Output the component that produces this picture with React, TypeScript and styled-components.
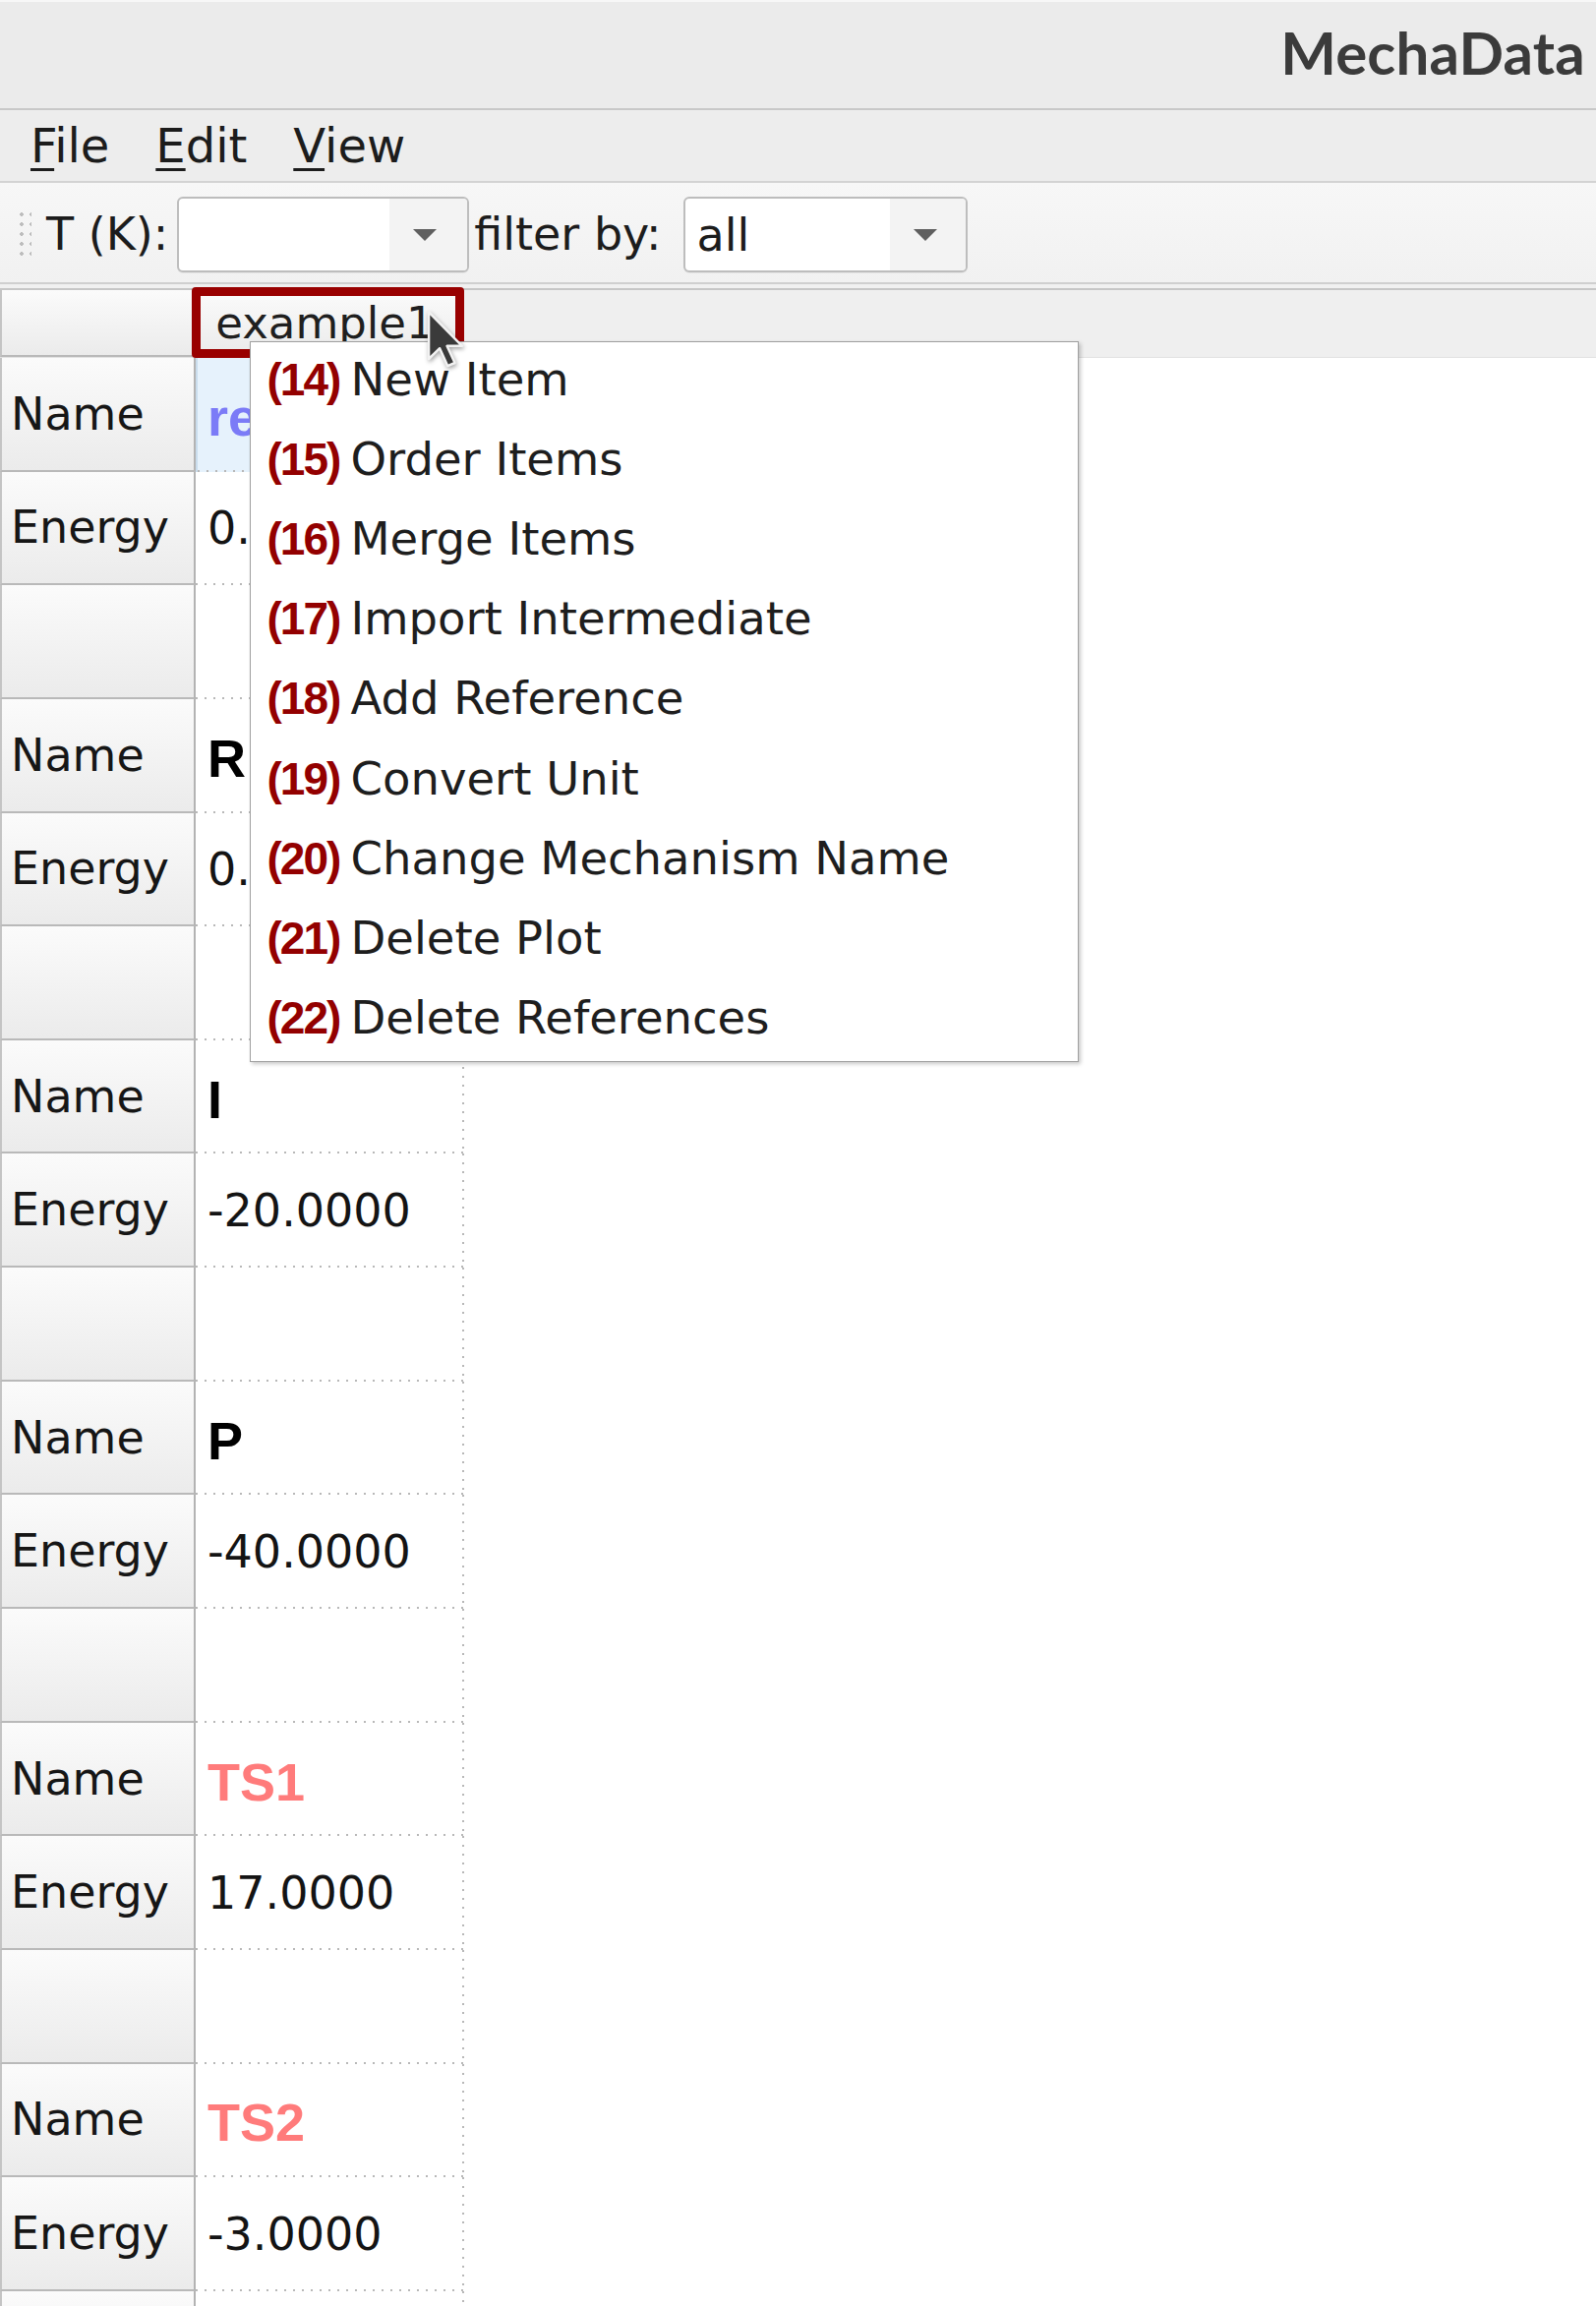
import React from 'react';
import styled, { createGlobalStyle } from 'styled-components';

const Global = createGlobalStyle`
  html, body { margin: 0; padding: 0; background: #ffffff; }
  body {
    width: 1623px;
    height: 2345px;
    overflow: hidden;
    font-family: "DejaVu Sans", "Noto Sans", sans-serif;
  }
`;

const Window = styled.div`
  position: relative;
  width: 1623px;
  height: 2345px;
  overflow: hidden;
  background: #ffffff;
  display: flex;
  flex-direction: column;
`;

const TitleBar = styled.header`
  flex: none;
  height: 112px;
  box-sizing: border-box;
  background: #ebebeb;
  border-top: 2px solid #f7f7f7;
  border-bottom: 2px solid #c8c8c8;
  display: flex;
  justify-content: flex-end;
  align-items: flex-start;
  padding: 15px 11px 0 0;
`;

const Title = styled.h1`
  margin: 0;
  font-family: "Lato", "Open Sans", sans-serif;
  font-weight: 700;
  font-size: 60px;
  line-height: 1.2;
  color: #3b3b3b;
  letter-spacing: 0.2px;
`;

const MenuBar = styled.nav`
  flex: none;
  height: 74px;
  box-sizing: border-box;
  background: #ededed;
  border-bottom: 2px solid #d3d3d3;
  display: flex;
  align-items: center;
  padding-left: 31px;
  gap: 47px;
`;

const MenuItem = styled.span`
  font-size: 48px;
  color: #1c1c1c;
  line-height: 1.15;
  padding-top: 2px;
`;

const Mnemonic = styled.span`
  text-decoration: underline;
  text-decoration-thickness: 3px;
  text-underline-offset: 6px;
`;

const ToolBar = styled.div`
  flex: none;
  height: 103px;
  box-sizing: border-box;
  background: linear-gradient(#f7f7f7, #f1f1f1);
  border-bottom: 2px solid #cfcfcf;
  display: flex;
  align-items: center;
  padding-left: 18px;
  padding-top: 4px;
`;

const Grip = styled.div`
  width: 14px;
  height: 52px;
  margin-right: 15px;
  background-image: radial-gradient(circle, #bdbdbd 1.6px, transparent 2px);
  background-size: 10px 10px;
  background-position: -1px 0;
`;

const ToolLabel = styled.span<{ $after: number }>`
  font-size: 46px;
  color: #1c1c1c;
  line-height: 1.15;
  margin-right: ${p => p.$after}px;
  white-space: pre;
`;

const Combo = styled.div<{ $w: number; $arrow: number }>`
  width: ${p => p.$w}px;
  height: 77px;
  box-sizing: border-box;
  border: 2px solid #bdbdbd;
  border-radius: 6px;
  background: #ffffff;
  display: grid;
  grid-template-columns: 1fr ${p => p.$arrow}px;
  overflow: hidden;
  margin-right: 5px;
  box-shadow: 0 1px 0 rgba(0, 0, 0, 0.05);
`;

const ComboText = styled.span`
  font-size: 46px;
  color: #1c1c1c;
  display: flex;
  align-items: center;
  padding-left: 11px;
`;

const ArrowBox = styled.span<{ $shift: number }>`
  background: #f3f3f3;
  display: flex;
  align-items: center;
  justify-content: center;
  padding-right: ${p => p.$shift}px;
`;

const Triangle = styled.span`
  width: 0;
  height: 0;
  border-left: 12px solid transparent;
  border-right: 12px solid transparent;
  border-top: 12px solid #5f5f5f;
`;

const Divider = styled.div`
  flex: none;
  height: 4px;
  background: #f0f0f0;
  border-bottom: 2px solid #c6c6c6;
`;

const HeaderRow = styled.div`
  flex: none;
  height: 69px;
  box-sizing: border-box;
  display: flex;
  background: #efefef;
  border-bottom: 1px solid #e2e2e2;
`;

const headerFace = `
  background: linear-gradient(#fbfbfb, #ebebeb);
  box-sizing: border-box;
  border-right: 2px solid #b3b3b3;
  border-bottom: 2px solid #b9b9b9;
`;

const CornerCell = styled.div`
  ${headerFace}
  width: 199px;
  border-left: 2px solid #c4c4c4;
`;

const ColumnHeader = styled.div`
  ${headerFace}
  position: relative;
  width: 273px;
  display: flex;
  align-items: center;
  justify-content: center;
  font-size: 45px;
  color: #1f1f1f;
  padding-right: 8px;
`;

const Highlight = styled.span`
  position: absolute;
  left: -4px;
  right: -2px;
  top: -3px;
  bottom: -3px;
  border: 9px solid #990000;
  border-radius: 4px;
  pointer-events: none;
`;

const Body = styled.div`
  flex: none;
  display: grid;
  grid-template-columns: 199px 273px;
  grid-auto-rows: 115.65px;
`;

const RowHeader = styled.div`
  ${headerFace}
  border-left: 2px solid #c4c4c4;
  display: flex;
  align-items: center;
  padding-left: 9px;
  font-size: 46px;
  color: #161616;
`;

const Cell = styled.div<{ $selected?: boolean }>`
  box-sizing: border-box;
  display: flex;
  align-items: center;
  overflow: hidden;
  white-space: nowrap;
  background-color: ${p => (p.$selected ? '#e6f2fc' : '#ffffff')};
  border-left: ${p => (p.$selected ? '2px solid #c9dcec' : '0')};
  padding-left: ${p => (p.$selected ? '10px' : '12px')};
  background-image:
    linear-gradient(to right, #b8b8b8 2px, transparent 2px),
    linear-gradient(to bottom, #b8b8b8 2px, transparent 2px);
  background-size: 9px 2px, 2px 9px;
  background-repeat: repeat-x, repeat-y;
  background-position: left bottom, right top;
`;

const EnergyValue = styled.span`
  font-size: 46px;
  color: #141414;
`;

const NameValue = styled.span<{ $color: string }>`
  font-family: "Liberation Sans", Arial, sans-serif;
  font-weight: 700;
  font-size: 54px;
  color: ${p => p.$color};
  padding-top: 4px;
`;

const Popup = styled.div`
  position: absolute;
  left: 254px;
  top: 347px;
  width: 843px;
  box-sizing: border-box;
  background: #ffffff;
  border: 1.5px solid #a0a0a0;
  box-shadow: 2px 2px 4px rgba(0, 0, 0, 0.22);
  display: flex;
  flex-direction: column;
  z-index: 5;
`;

const PopupItem = styled.div`
  height: 81.2px;
  box-sizing: border-box;
  display: flex;
  align-items: center;
  padding: 0 0 6px 16.5px;
`;

const ItemNo = styled.span`
  flex: none;
  width: 85px;
  font-family: "Liberation Sans", Arial, sans-serif;
  font-weight: 700;
  font-size: 46px;
  letter-spacing: -2px;
  color: #930000;
`;

const ItemLabel = styled.span`
  font-size: 46.5px;
  color: #1e1e1e;
`;

const Cursor = styled.svg`
  position: absolute;
  left: 433px;
  top: 314px;
  width: 40px;
  height: 62px;
  z-index: 10;
  filter: drop-shadow(1px 2px 2px rgba(0, 0, 0, 0.35));
`;

type Row = {
  label: string;
  name?: string;
  color?: string;
  energy?: string;
  selected?: boolean;
};

const rows: Row[] = [
  { label: 'Name', name: 'reference', color: '#7b7bf7', selected: true },
  { label: 'Energy', energy: '0.0000' },
  { label: '' },
  { label: 'Name', name: 'R', color: '#000000' },
  { label: 'Energy', energy: '0.0000' },
  { label: '' },
  { label: 'Name', name: 'I', color: '#000000' },
  { label: 'Energy', energy: '-20.0000' },
  { label: '' },
  { label: 'Name', name: 'P', color: '#000000' },
  { label: 'Energy', energy: '-40.0000' },
  { label: '' },
  { label: 'Name', name: 'TS1', color: '#ff7b7b' },
  { label: 'Energy', energy: '17.0000' },
  { label: '' },
  { label: 'Name', name: 'TS2', color: '#ff7b7b' },
  { label: 'Energy', energy: '-3.0000' },
  { label: '' },
];

const menuItems: [string, string][] = [
  ['(14)', 'New Item'],
  ['(15)', 'Order Items'],
  ['(16)', 'Merge Items'],
  ['(17)', 'Import Intermediate'],
  ['(18)', 'Add Reference'],
  ['(19)', 'Convert Unit'],
  ['(20)', 'Change Mechanism Name'],
  ['(21)', 'Delete Plot'],
  ['(22)', 'Delete References'],
];

export default function App() {
  return (
    <Window>
      <Global />
      <TitleBar>
        <Title>MechaData</Title>
      </TitleBar>
      <MenuBar>
        <MenuItem><Mnemonic>F</Mnemonic>ile</MenuItem>
        <MenuItem><Mnemonic>E</Mnemonic>dit</MenuItem>
        <MenuItem><Mnemonic>V</Mnemonic>iew</MenuItem>
      </MenuBar>
      <ToolBar>
        <Grip />
        <ToolLabel $after={9}>T (K):</ToolLabel>
        <Combo $w={297} $arrow={79}>
          <ComboText />
          <ArrowBox $shift={8}><Triangle /></ArrowBox>
        </Combo>
        <ToolLabel $after={23}>filter by:</ToolLabel>
        <Combo $w={289} $arrow={77}>
          <ComboText>all</ComboText>
          <ArrowBox $shift={6}><Triangle /></ArrowBox>
        </Combo>
      </ToolBar>
      <Divider />
      <HeaderRow>
        <CornerCell />
        <ColumnHeader>
          example1
          <Highlight />
        </ColumnHeader>
      </HeaderRow>
      <Body>
        {rows.map((r, i) => (
          <React.Fragment key={i}>
            <RowHeader>{r.label}</RowHeader>
            <Cell $selected={r.selected}>
              {r.name && <NameValue $color={r.color || '#000'}>{r.name}</NameValue>}
              {r.energy && <EnergyValue>{r.energy}</EnergyValue>}
            </Cell>
          </React.Fragment>
        ))}
      </Body>
      <Popup>
        {menuItems.map(([n, t]) => (
          <PopupItem key={n}>
            <ItemNo>{n}</ItemNo>
            <ItemLabel>{t}</ItemLabel>
          </PopupItem>
        ))}
      </Popup>
      <Cursor viewBox="0 0 13 20">
        <path
          d="M1 1 L1 16.5 L4.6 13 L7.2 18.8 L9.6 17.8 L7 12.2 L12 12.2 Z"
          fill="#3a3a3a"
          stroke="#f2f2f2"
          strokeWidth="0.8"
          strokeLinejoin="round"
        />
      </Cursor>
    </Window>
  );
}
